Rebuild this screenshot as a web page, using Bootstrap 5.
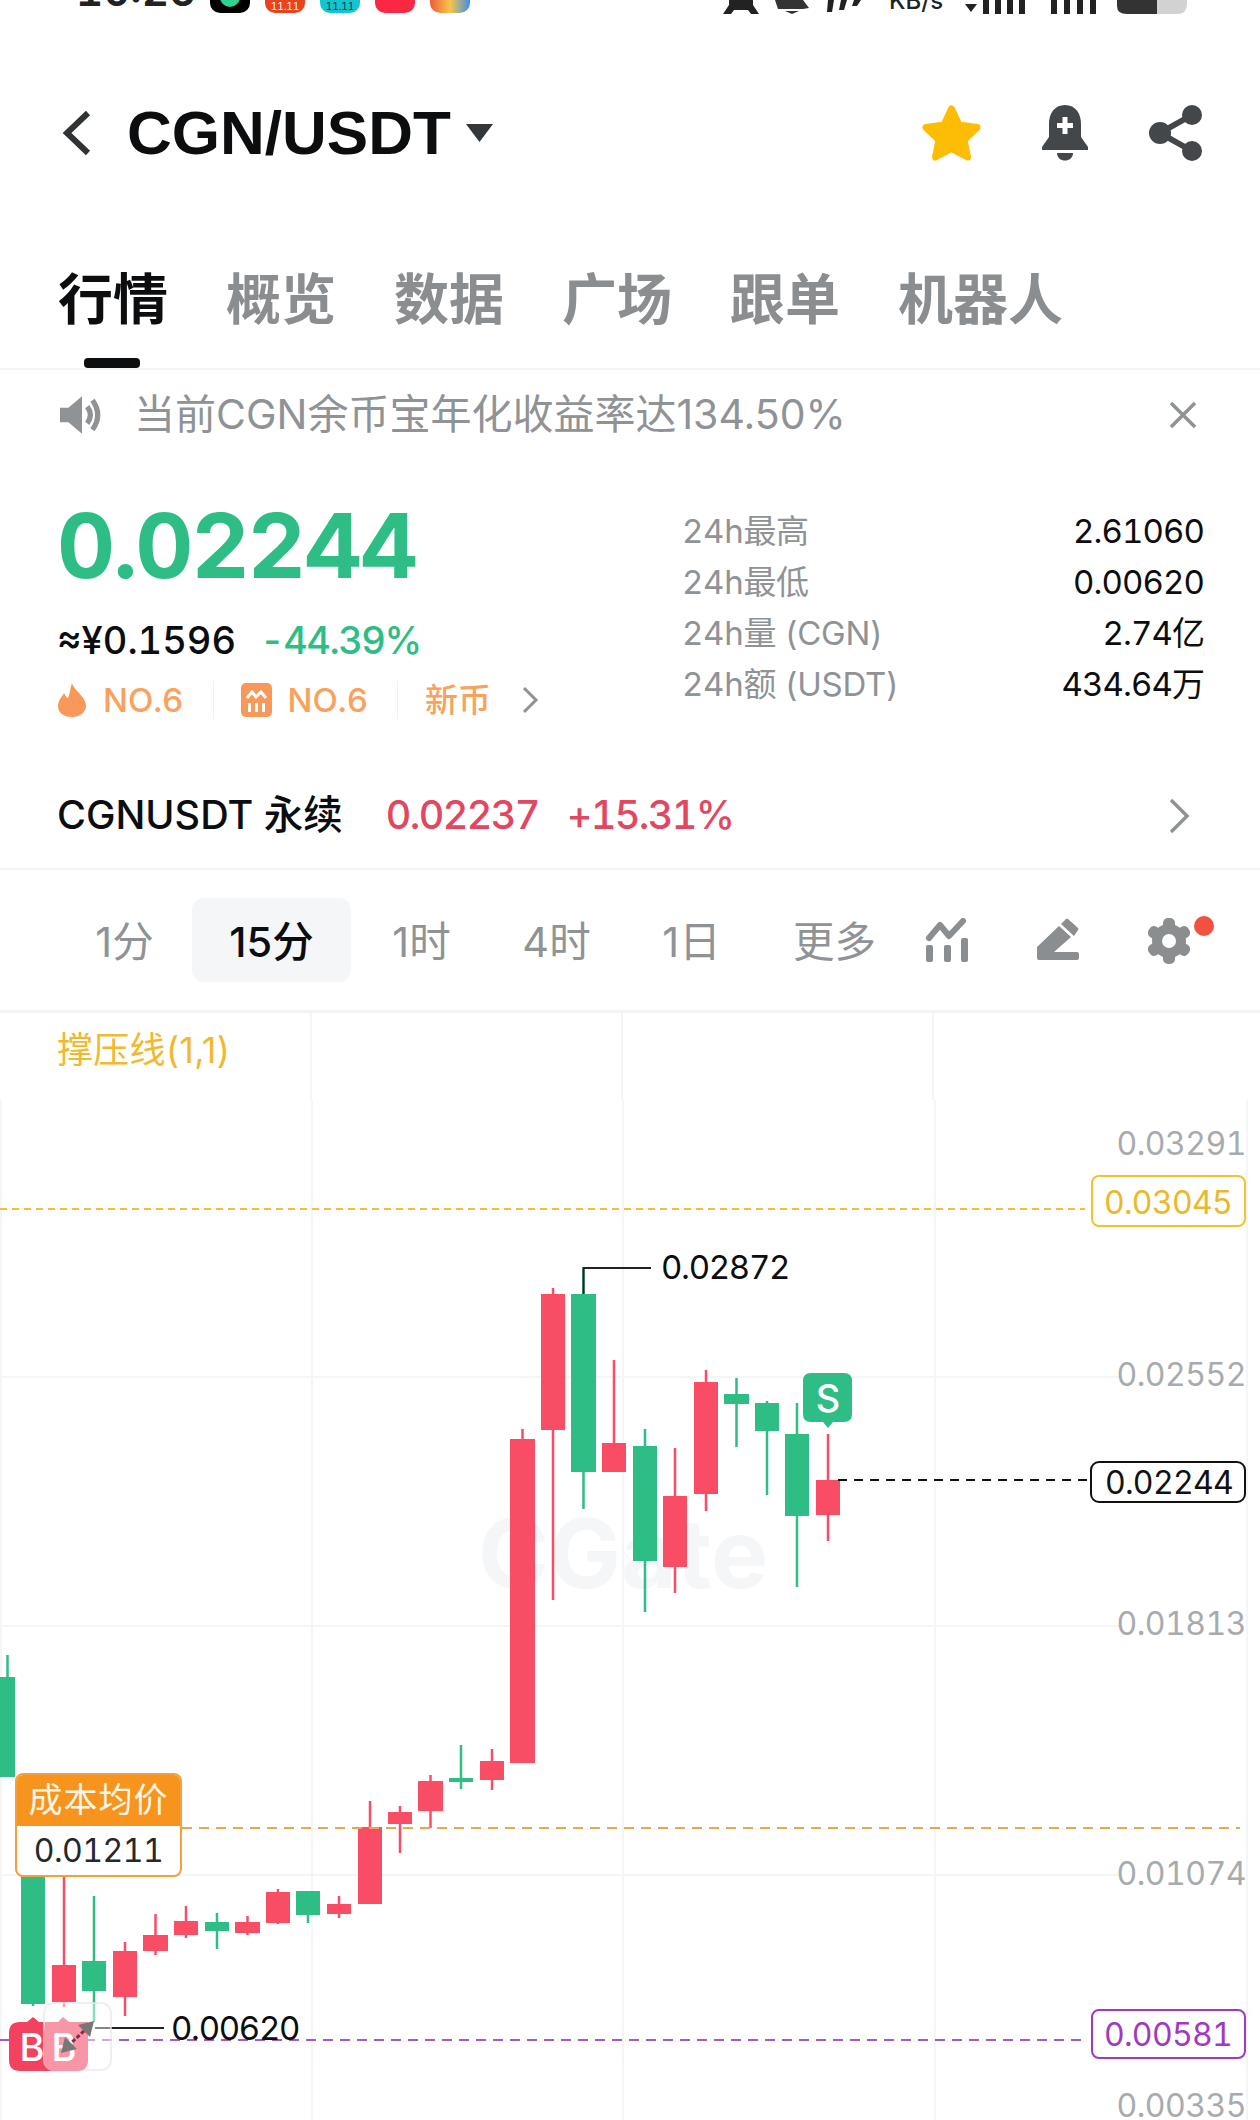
<!DOCTYPE html>
<html lang="zh-CN">
<head>
    <meta charset="UTF-8">
    <meta name="viewport" content="width=device-width, initial-scale=1.0">
    <title>CGN/USDT</title>
    <link rel="stylesheet" href="https://cdn.jsdelivr.net/npm/bootstrap@5.3.0/dist/css/bootstrap.min.css">
    <style>
        body { width: 1260px; height: 2120px; overflow: hidden; background: #fff; color: #0c0d0f; font-family: Inter, "Noto Sans CJK SC", sans-serif; font-variant-numeric: tabular-nums; }
        .status-strip { height: 14px; overflow: hidden; padding: 0 73px 0 76px; }
        .status-time { font-size: 42px; font-weight: 600; line-height: 42px; margin-top: -30px; width: 134px; color: #222; }
        .status-app { width: 40px; height: 40px; margin-top: -27px; margin-right: 15px; border-radius: 10px; position: relative; overflow: hidden; text-align: center; color: #fff; font-size: 10px; line-height: 10px; padding-top: 28px; }
        .app-black { background: #000; }
        .app-black::after { content: ""; position: absolute; left: 10px; top: 20px; width: 20px; height: 14px; border-radius: 0 0 10px 10px; background: #2fd28f; }
        .app-red { background: #e8421e; }
        .app-teal { background: #14c5cf; color: #06313a; }
        .app-rose { background: #fb2843; }
        .app-multi { background: linear-gradient(90deg, #ef5b3b, #f5c64a 50%, #3f8fe8); }
        .status-net { font-size: 24px; line-height: 24px; margin-top: -11px; width: 52px; color: #222; font-weight: 500; }
        .head-bar { height: 238px; padding: 0 57px 0 62px; }
        .pair-name { font-family: "Liberation Sans", sans-serif; font-size: 62px; font-weight: 700; line-height: 1; margin-left: 35px; margin-right: 15px; }
        .head-icons { gap: 59px; }
        .tab-bar { height: 118px; border-bottom: 2px solid #f2f3f4; padding-left: 58px; gap: 58px; }
        .tab-link { font-size: 55px; line-height: 95px; font-weight: 700; color: #8a8e90; padding: 0; position: relative; height: 116px; }
        .tab-link.active-tab { color: #0c0d0f; }
        .tab-link.active-tab::after { content: ""; position: absolute; left: 26px; bottom: 0; width: 56px; height: 10px; border-radius: 4px; background: #0c0d0f; }
        .notice-bar { height: 70px; padding: 0 63px 0 60px; color: #8f9396; font-size: 41px; margin-top: 10px; font-variant-numeric: proportional-nums; }
        .notice-text { margin-left: 30px; }
        .ticker-area { height: 312px; padding: 0 56px 0 57px; }
        .price-big { font-size: 90px; font-weight: 700; line-height: 1; color: #2dbd85; letter-spacing: -2px; margin-top: 51px; }
        .price-sub { font-size: 38px; line-height: 1; margin-top: 30px; gap: 24px; font-weight: 500; }
        .up-text { color: #2dbd85; letter-spacing: -1.500px; }
        .rank-row { color: #f8a25e; font-size: 33px; line-height: 1; margin-top: 22px; font-weight: 500; }
        .rank-sep { width: 1px; height: 38px; background: #f1f1f1; margin: 0 27px 0 29px; }
        .rank-more { margin-left: 30px; }
        .stat-col { width: 522px; margin-top: 56px; font-size: 33px; }
        .stat-line { height: 51px; }
        .stat-label { color: #8f9396; letter-spacing: -.3px; }
        .stat-val { letter-spacing: -.9px; }
        .perp-bar { height: 108px; border-bottom: 2px solid #f2f3f4; padding: 2px 70px 0 57px; font-size: 39.500px; }
        .perp-name { margin-right: 43px; font-weight: 500; }
        .down-text { color: #e3475f; font-weight: 500; margin-right: 28px; letter-spacing: -1.600px; }
        .frame-bar { height: 143px; border-bottom: 3px solid #f2f3f4; position: relative; padding-left: 57px; font-size: 41.500px; color: #8f9396; font-variant-numeric: proportional-nums; }
        .frame-item { width: 135px; height: 84px; line-height: 88px; text-align: center; border-radius: 12px; }
        .frame-item.frame-on { width: 159px; background: #f5f6f7; color: #0c0d0f; font-weight: 500; margin: 0 3px 0 0; }
        .frame-more { margin-left: 8px; }
        .frame-icons { position: absolute; right: 70px; top: 48px; gap: 69px; }
        .red-dot { position: absolute; right: -24px; top: -2px; width: 20px; height: 20px; border-radius: 50%; background: #f2513f; }
        .chart-area { height: 1107px; overflow: hidden; position: relative; }
        .chart-area svg { display: block; }
        .legend-text { position: absolute; left: 57px; top: 16px; color: #f2b92f; font-size: 36px; line-height: 1.2; letter-spacing: .3px; font-variant-numeric: proportional-nums; }
        .cost-tag { position: absolute; left: 15px; top: 760px; width: 167px; height: 104px; border: 2px solid #f4a13a; border-radius: 8px; background: #fff; overflow: hidden; text-align: center; }
        .cost-head { background: #f7941d; color: #fff6e5; height: 51px; line-height: 50px; font-size: 34px; letter-spacing: 1px; }
        .cost-val { font-size: 32px; line-height: 50px; color: #25282c; letter-spacing: -.5px; }
        .grid-line { stroke: #f4f5f6; stroke-width: 2; }
        .axis-label { fill: #a8abad; font-size: 32px; text-anchor: end; letter-spacing: -.5px; }
        .price-box { font-size: 32px; text-anchor: middle; letter-spacing: -.7px; }
        .mark-label { font-size: 33px; fill: #0c0d0f; letter-spacing: -1.300px; }
    </style>
</head>
<body>
    <div class="status-strip d-flex justify-content-between">
        <div class="d-flex">
            <div class="status-time">10:26</div>
            <div class="status-app app-black"></div>
            <div class="status-app app-red">11.11</div>
            <div class="status-app app-teal">11.11</div>
            <div class="status-app app-rose"></div>
            <div class="status-app app-multi"></div>
        </div>
        <div class="d-flex">
            <svg width="36" height="14" viewBox="0 0 36 14"><path d="M0 14 6 5V0H30V5L36 14H28L25 10H11L8 14Z" fill="#222"/></svg>
            <svg class="ms-3" width="34" height="14" viewBox="0 0 34 14"><path d="M0 0H28L34 8 28 9H3ZM10 11H24L17 14Z" fill="#333"/></svg>
            <svg class="ms-3" width="40" height="14" viewBox="0 0 40 14" fill="#222"><path d="M3 0H9L7 12H2ZM16 0H22L19 10H14ZM29 0H36L32 6H27Z"/></svg>
            <div class="status-net ms-4">KB/s</div>
            <svg class="ms-4" width="62" height="14" viewBox="0 0 62 14" fill="#222"><path d="M0 4H12L6 12ZM18 0H24V14H18ZM30 0H36V14H30ZM42 0H48V14H42ZM54 0H60V14H54Z"/></svg>
            <svg class="ms-4" width="50" height="14" viewBox="0 0 50 14" fill="#222"><path d="M0 0H6V14H0ZM13 0H19V14H13ZM26 0H32V14H26ZM39 0H45V14H39Z"/></svg>
            <svg class="ms-3" width="70" height="14" viewBox="0 0 70 14"><path d="M0 0H40V14H10Q0 14 0 6Z" fill="#333"/><path d="M40 0H70V4Q70 14 60 14H40Z" fill="#d2d2d2"/></svg>
        </div>
    </div>

    <header class="head-bar d-flex align-items-center justify-content-between">
        <div class="d-flex align-items-center">
            <svg width="30" height="46" viewBox="0 0 30 46"><path d="M26 3 5 23 26 43" fill="none" stroke="#303336" stroke-width="6"/></svg>
            <div class="pair-name">CGN/USDT</div>
            <svg width="27" height="18" viewBox="0 0 27 18"><path d="M0 0H27L13.5 18Z" fill="#33373a"/></svg>
        </div>
        <div class="d-flex align-items-center head-icons">
            <svg width="59" height="56" viewBox="0 0 59 56"><path d="M29.5 4 37 20 55 22.500 42 35 45.500 52 29.500 43.500 13.500 52 17 35 4 22.500 22 20Z" fill="#fdbc05" stroke="#fdbc05" stroke-width="7" stroke-linejoin="round"/></svg>
            <svg width="50" height="56" viewBox="0 0 50 56"><path d="M25 0C14 0 9 9 9 19V32L2 42V45H48V42L41 32V19C41 9 36 0 25 0Z" fill="#43474a"/><path d="M17 48H33C33 58 17 58 17 48Z" fill="#43474a"/><path d="M22.500 12H27.500V18H33V23H27.500V29H22.500V23H17V18H22.500Z" fill="#fff"/></svg>
            <svg width="54" height="56" viewBox="0 0 54 56"><path d="M43 10 11 28 43 46" fill="none" stroke="#43474a" stroke-width="6"/><circle cx="43" cy="10" r="10" fill="#43474a"/><circle cx="11" cy="28" r="11" fill="#43474a"/><circle cx="43" cy="46" r="10" fill="#43474a"/></svg>
        </div>
    </header>

    <nav class="nav tab-bar">
        <a class="nav-link tab-link active-tab" href="#">行情</a>
        <a class="nav-link tab-link" href="#">概览</a>
        <a class="nav-link tab-link" href="#">数据</a>
        <a class="nav-link tab-link" href="#">广场</a>
        <a class="nav-link tab-link" href="#">跟单</a>
        <a class="nav-link tab-link" href="#">机器人</a>
    </nav>

    <div class="notice-bar d-flex align-items-center">
        <svg width="44" height="40" viewBox="0 0 42 38"><path d="M0 12H8L21 1V37L8 26H0Z" fill="#8f9396"/><path d="M26 11Q32 19 26 27M31 5Q41 19 31 33" fill="none" stroke="#8f9396" stroke-width="5"/></svg>
        <span class="notice-text flex-grow-1">当前CGN余币宝年化收益率达134.50%</span>
        <svg width="28" height="28" viewBox="0 0 28 28"><path d="M2 2 26 26M26 2 2 26" stroke="#8f9396" stroke-width="3.500"/></svg>
    </div>

    <section class="ticker-area d-flex justify-content-between">
        <div>
            <div class="price-big">0.02244</div>
            <div class="price-sub d-flex"><span>≈¥0.1596</span><span class="up-text">-44.39%</span></div>
            <div class="rank-row d-flex align-items-center">
                <svg class="me-3" width="30" height="34" viewBox="0 0 30 34"><path d="M15 0C17 8 30 14 29 24 28 30 22 34 15 34 7 34 1 30 1 23 1 17 5 14 7 10 9 14 10 15 11 15 13 11 13 5 15 0Z" fill="#f8985a"/></svg>
                <span>NO.6</span>
                <div class="rank-sep"></div>
                <svg class="me-3" width="31" height="34" viewBox="0 0 31 34"><rect width="31" height="34" rx="5" fill="#f8985a"/><path d="M6 15 11 9 15 14 20 9 25 15" fill="none" stroke="#fff" stroke-width="3"/><path d="M7 20H10V29H7ZM14 20H17V29H14ZM21 20H24V29H21Z" fill="#fff"/></svg>
                <span>NO.6</span>
                <div class="rank-sep"></div>
                <span>新币</span>
                <svg class="rank-more" width="18" height="30" viewBox="0 0 18 30"><path d="M3 3 15 15 3 27" fill="none" stroke="#8f9396" stroke-width="3"/></svg>
            </div>
        </div>
        <div class="stat-col">
            <div class="stat-line d-flex justify-content-between align-items-center"><span class="stat-label">24h最高</span><span class="stat-val">2.61060</span></div>
            <div class="stat-line d-flex justify-content-between align-items-center"><span class="stat-label">24h最低</span><span class="stat-val">0.00620</span></div>
            <div class="stat-line d-flex justify-content-between align-items-center"><span class="stat-label">24h量 (CGN)</span><span class="stat-val">2.74亿</span></div>
            <div class="stat-line d-flex justify-content-between align-items-center"><span class="stat-label">24h额 (USDT)</span><span class="stat-val">434.64万</span></div>
        </div>
    </section>

    <div class="perp-bar d-flex align-items-center">
        <span class="perp-name">CGNUSDT 永续</span>
        <span class="down-text">0.02237</span>
        <span class="down-text flex-grow-1">+15.31%</span>
        <svg width="22" height="36" viewBox="0 0 22 36"><path d="M3 2 19 18 3 34" fill="none" stroke="#8f9396" stroke-width="3.500"/></svg>
    </div>

    <div class="frame-bar d-flex align-items-center">
        <div class="frame-item">1分</div>
        <div class="frame-item frame-on">15分</div>
        <div class="frame-item">1时</div>
        <div class="frame-item">4时</div>
        <div class="frame-item">1日</div>
        <div class="frame-item frame-more">更多</div>
        <div class="frame-icons d-flex">
            <svg width="43" height="44" viewBox="0 0 43 44" fill="#8a8e90"><path d="M4 20 15 7 24 18 38 3" fill="none" stroke="#8a8e90" stroke-width="6" stroke-linecap="round" stroke-linejoin="round"/><rect x="1" y="27" width="7" height="17" rx="2"/><rect x="19" y="27" width="7" height="17" rx="2"/><rect x="36" y="20" width="7" height="24" rx="2"/></svg>
            <svg width="42" height="42" viewBox="0 0 42 42" fill="#8a8e90"><path d="M0 29 22 8 34 19 17 34H40Q42 34 42 36V40Q42 42 40 42H2Q0 42 0 40Z"/><path d="M29 1Q30 0 31 1L41 10Q42 11 41 12L37 18 24 6Z"/></svg>
            <div class="position-relative">
                <svg class="d-block" width="42" height="46" viewBox="-21 -23 42 46" fill="#8a8e90"><circle r="17"/><rect x="-6" y="-23" width="12" height="46" rx="5"/><rect x="-6" y="-23" width="12" height="46" rx="5" transform="rotate(60)"/><rect x="-6" y="-23" width="12" height="46" rx="5" transform="rotate(120)"/><circle r="7" fill="#fff"/></svg>
                <div class="red-dot"></div>
            </div>
        </div>
    </div>

    <div class="chart-area">
        <!-- svg coords are page coords, shifted up by the 1013px above the chart -->
        <svg id="chartSvg" width="1260" height="1107" viewBox="0 1013 1260 1107">
            <g class="grid-line">
                <path d="M311 1013V1100M622 1013V1100M933 1013V1100M1 1100V2120M312 1100V2120M623 1100V2120M935 1100V2120M1247 1100V2120M0 1377H1120M0 1626H1120M0 1875H1120"/>
            </g>
            <text x="478" y="1588" font-size="96" font-weight="700" fill="#f5f6f7">CGate</text>
            <g id="candles"></g>
            <path d="M0 1209H1085" stroke="#f3c033" stroke-width="2" stroke-dasharray="7 5"/>
            <path d="M182 1828H1240" stroke="#eaa748" stroke-width="2" stroke-dasharray="10 7"/>
            <path d="M0 2040H1085" stroke="#a858c4" stroke-width="2" stroke-dasharray="10 7"/>
            <path d="M838 1480H1089" stroke="#111" stroke-width="2" stroke-dasharray="9 7"/>
            <text class="axis-label" x="1246" y="1155">0.03291</text>
            <text class="axis-label" x="1246" y="1386">0.02552</text>
            <text class="axis-label" x="1246" y="1635">0.01813</text>
            <text class="axis-label" x="1246" y="1885">0.01074</text>
            <text class="axis-label" x="1246" y="2117">0.00335</text>
            <rect x="1092" y="1176" width="153" height="50" rx="7" fill="#fff" stroke="#f1c232" stroke-width="2"/>
            <text class="price-box" x="1168" y="1214" fill="#eab92a">0.03045</text>
            <rect x="1091" y="1462" width="154" height="40" rx="8" fill="#fff" stroke="#111" stroke-width="2"/>
            <text class="price-box" x="1169" y="1494" fill="#111">0.02244</text>
            <rect x="1092" y="2010" width="153" height="48" rx="7" fill="#fff" stroke="#a13ac0" stroke-width="2"/>
            <text class="price-box" x="1168" y="2046" fill="#a13ac0">0.00581</text>
            <path d="M583.500 1294V1268H651" fill="none" stroke="#222" stroke-width="2"/>
            <text class="mark-label" x="661" y="1279">0.02872</text>
            <path d="M95 2028H164" stroke="#222" stroke-width="2"/>
            <text class="mark-label" x="171" y="2040">0.00620</text>
            <!-- S marker -->
            <path d="M811 1373H844Q852 1373 852 1381V1414Q852 1422 844 1422H833L828 1428 823 1422H811Q803 1422 803 1414V1381Q803 1373 811 1373Z" fill="#2dbd85"/>
            <text x="828" y="1412" font-size="38" font-weight="500" fill="#fff" text-anchor="middle">S</text>
            <!-- B markers and the floating window button over them -->
            <path d="M20 2022H27L33 2017 39 2022H58V2071H20Q9 2071 9 2060V2033Q9 2022 20 2022Z" fill="#f2425f"/>
            <text x="32" y="2061" font-size="38" font-weight="500" fill="#fff" text-anchor="middle">B</text>
            <rect x="44" y="2003" width="67" height="67" rx="10" fill="#fff" fill-opacity=".45" stroke="#e8e8e8" stroke-opacity=".7" stroke-width="2"/>
            <path d="M55 2022H58L63 2017 69 2022H88V2060Q88 2071 77 2071H55Q44 2071 44 2060V2033Q44 2022 55 2022Z" fill="#f895a6"/>
            <text x="64" y="2061" font-size="38" font-weight="500" fill="#fff" text-anchor="middle">B</text>
            <path d="M94 2021 78 2025 90 2037ZM61 2053 77 2049 65 2037Z" fill="#777"/>
            <path d="M84 2031 71 2043" stroke="#8a2a45" stroke-width="3" stroke-dasharray="4 2"/>
        </svg>
        <div class="legend-text">撑压线(1,1)</div>
        <div class="cost-tag">
            <div class="cost-head">成本均价</div>
            <div class="cost-val">0.01211</div>
        </div>
    </div>

    <script>
        // [left, width, bodyTop, bodyBottom, wickTop, wickBottom, up]
        const candles = [
            [0, 15, 1677, 1777, 1655, 1777, 1],
            [21, 24, 1777, 2004, 1777, 2006, 1],
            [52, 24, 1965, 2002, 1800, 2007, 0],
            [82, 24, 1961, 1991, 1896, 2022, 1],
            [113, 24, 1951, 1997, 1942, 2016, 0],
            [143, 25, 1935, 1951, 1914, 1955, 0],
            [174, 24, 1921, 1935, 1906, 1938, 0],
            [205, 24, 1922, 1931, 1913, 1949, 1],
            [235, 25, 1922, 1933, 1916, 1935, 0],
            [266, 24, 1892, 1923, 1889, 1924, 0],
            [296, 24, 1891, 1915, 1891, 1923, 1],
            [327, 24, 1904, 1914, 1896, 1918, 0],
            [358, 24, 1827, 1904, 1801, 1904, 0],
            [388, 24, 1812, 1824, 1806, 1853, 0],
            [418, 25, 1781, 1811, 1775, 1828, 0],
            [449, 24, 1778, 1782, 1745, 1789, 1],
            [480, 24, 1761, 1780, 1749, 1790, 0],
            [510, 25, 1439, 1763, 1429, 1763, 0],
            [541, 24, 1294, 1430, 1288, 1600, 0],
            [571, 25, 1294, 1472, 1268, 1509, 1],
            [602, 24, 1443, 1472, 1360, 1472, 0],
            [633, 24, 1446, 1561, 1429, 1612, 1],
            [663, 24, 1496, 1567, 1448, 1593, 0],
            [694, 24, 1382, 1494, 1370, 1511, 0],
            [724, 25, 1394, 1404, 1378, 1447, 1],
            [755, 24, 1403, 1431, 1401, 1495, 1],
            [785, 24, 1434, 1516, 1403, 1587, 1],
            [816, 24, 1480, 1515, 1434, 1541, 0]
        ];

        const svgNs = 'http://www.w3.org/2000/svg';
        const group = document.getElementById('candles');

        function addRect(x, y, w, h, color) {
            const rect = document.createElementNS(svgNs, 'rect');
            rect.setAttribute('x', x);
            rect.setAttribute('y', y);
            rect.setAttribute('width', w);
            rect.setAttribute('height', h);
            rect.setAttribute('fill', color);
            group.appendChild(rect);
        }

        candles.forEach(c => {
            const color = c[6] ? '#2dbd85' : '#f94d66';
            addRect(c[0] + c[1] / 2 - 1.25, c[4], 2.5, c[5] - c[4], color);
            addRect(c[0], c[2], c[1], c[3] - c[2], color);
        });
    </script>

    <script src="https://cdn.jsdelivr.net/npm/bootstrap@5.3.0/dist/js/bootstrap.bundle.min.js"></script>
</body>
</html>
